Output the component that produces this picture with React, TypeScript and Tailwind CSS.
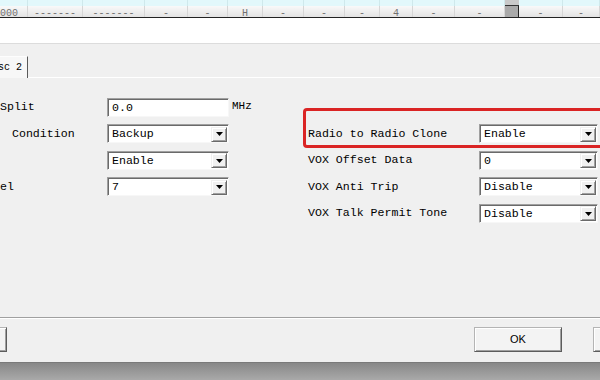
import React from 'react'

// Clipped view of a radio programming dialog (Misc 2 tab)
const MONO = "font-['Liberation_Mono','Courier_New',monospace]"

const COLS = [
  { w: 'w-[28px]', top: '000', bottom: '000', left: true },
  { w: 'w-[55px]', top: '0.00000', bottom: '-------' },
  { w: 'w-[62px]', top: '0.00000', bottom: '-------' },
  { w: 'w-[43px]', top: '', bottom: '-' },
  { w: 'w-[40px]', top: '', bottom: '-' },
  { w: 'w-[35px]', top: 'H', bottom: 'H' },
  { w: 'w-[41px]', top: '', bottom: '-' },
  { w: 'w-[41px]', top: '', bottom: '-' },
  { w: 'w-[35px]', top: '', bottom: '-' },
  { w: 'w-[33px]', top: '4', bottom: '4' },
  { w: 'w-[42px]', top: '', bottom: '-' },
  { w: 'w-[50px]', top: '', bottom: '-', thumbAfter: true },
  { w: 'w-[44px]', top: '', bottom: '-' },
  { w: 'w-[37px]', top: '', bottom: '-' },
]

function GridStrip() {
  return (
    <div className="h-[18px] shrink-0 overflow-hidden border-b border-b-[#222]">
      <div className={`-mt-[6px] flex text-[10px] ${MONO}`}>
        {COLS.map((c, i) => (
          <React.Fragment key={i}>
            <div className={`${c.w} flex shrink-0 flex-col`}>
              <div
                className={`flex h-[12px] items-end border-r border-r-[#cfe9ec] bg-[#e2f8fb] ${
                  c.left ? 'justify-start' : 'justify-center'
                }`}
              >
                <span className="mb-[4px] leading-none text-black">{c.top}</span>
              </div>
              <div
                className={`flex h-[11px] items-end border-r border-r-[#d6d6d6] bg-gradient-to-b from-[#f9f9f9] to-[#e3e3e3] ${
                  c.left ? 'justify-start' : 'justify-center'
                }`}
              >
                <span className="-mb-[2px] leading-none text-[#707070]">{c.bottom}</span>
              </div>
            </div>
            {c.thumbAfter && (
              <div className="flex w-[14px] shrink-0 flex-col">
                <div className="h-[12px] border-b border-b-[#333] bg-[#c9c9c9]" />
                <div className="h-[11px] border-r border-r-[#222] bg-[#a9a9a9]" />
              </div>
            )}
          </React.Fragment>
        ))}
      </div>
    </div>
  )
}

function Arrow() {
  return (
    <svg width="7" height="4" viewBox="0 0 7 4">
      <path d="M0 0h7L3.5 4z" fill="#000" />
    </svg>
  )
}

function Field({ value, dropdown = true }: { value: string; dropdown?: boolean }) {
  return (
    <div className="flex h-[19px] w-full items-center border border-t-[#a0a0a0] border-l-[#a0a0a0] border-r-[#f7f7f7] border-b-[#f7f7f7] bg-white shadow-[inset_1px_1px_0_#6a6a6a]">
      <span className="flex-1 pl-[4px] pt-[1px] text-[11.6px] leading-none">{value}</span>
      {dropdown && (
        <div className="mr-[1px] mt-[1px] flex h-[15px] w-[16px] items-center justify-center border border-t-[#f0f0f0] border-l-[#f0f0f0] border-r-[#6a6a6a] border-b-[#6a6a6a] bg-[#f0f0f0] shadow-[inset_1px_1px_0_#fff,inset_-1px_-1px_0_#a0a0a0]">
          <Arrow />
        </div>
      )}
    </div>
  )
}

function Row({ children }: { children: React.ReactNode }) {
  return <div className="flex h-[26.5px] items-center">{children}</div>
}

function WinButton({ label, className = '' }: { label: string; className?: string }) {
  return (
    <div
      className={`flex h-[25px] w-[88px] shrink-0 items-center justify-center border border-t-[#b4b4b4] border-l-[#b4b4b4] border-r-[#5c5c5c] border-b-[#5c5c5c] bg-[#f3f3f3] shadow-[inset_1px_1px_0_#fff,inset_-1px_-1px_0_#a0a0a0] font-['Liberation_Sans',Arial,sans-serif] text-[11px] text-black ${className}`}
    >
      {label}
    </div>
  )
}

export default function App() {
  return (
    <div className={`relative flex h-[380px] w-[600px] flex-col overflow-hidden bg-[#f0f0f0] text-black ${MONO}`}>
      <GridStrip />
      <div className="h-[26px] shrink-0 border-b border-b-[#dcdcdc] bg-white" />

      {/* tab strip */}
      <div className="mt-[12px] flex h-[22px] shrink-0">
        <div className="flex h-[22px] w-[28px] items-center justify-end overflow-hidden border-t border-t-[#fdfdfd] border-r border-r-[#5a5a5a] bg-[#f7f7f7] pr-[5px] text-[10px] whitespace-nowrap">
          Misc 2
        </div>
        <div className="flex-1 border-b border-b-white" />
      </div>

      {/* tab panel */}
      <div className="flex h-[239px] shrink-0 pt-[15.75px] text-[11.6px]">
        <div className="flex w-[308px] shrink-0 flex-col">
          <Row>
            <span className="w-[107px] shrink-0 whitespace-nowrap">Split</span>
            <div className="w-[122px] shrink-0">
              <Field value="0.0" dropdown={false} />
            </div>
            <span className="ml-[3px] self-start pt-[4px] text-[11px]">MHz</span>
          </Row>
          <Row>
            <span className="w-[107px] shrink-0 whitespace-nowrap pl-[12px]">Condition</span>
            <div className="w-[122px] shrink-0">
              <Field value="Backup" />
            </div>
          </Row>
          <Row>
            <span className="w-[107px] shrink-0" />
            <div className="w-[122px] shrink-0">
              <Field value="Enable" />
            </div>
          </Row>
          <Row>
            <span className="w-[107px] shrink-0">el</span>
            <div className="w-[122px] shrink-0">
              <Field value="7" />
            </div>
          </Row>
        </div>

        <div className="flex w-[290px] shrink-0 flex-col pt-[26.5px]">
          <Row>
            <span className="w-[171px] shrink-0 whitespace-nowrap">Radio to Radio Clone</span>
            <div className="w-[119px] shrink-0">
              <Field value="Enable" />
            </div>
          </Row>
          <Row>
            <span className="w-[171px] shrink-0 whitespace-nowrap">VOX Offset Data</span>
            <div className="w-[119px] shrink-0">
              <Field value="0" />
            </div>
          </Row>
          <Row>
            <span className="w-[171px] shrink-0 whitespace-nowrap">VOX Anti Trip</span>
            <div className="w-[119px] shrink-0">
              <Field value="Disable" />
            </div>
          </Row>
          <Row>
            <span className="w-[171px] shrink-0 whitespace-nowrap">VOX Talk Permit Tone</span>
            <div className="w-[119px] shrink-0">
              <Field value="Disable" />
            </div>
          </Row>
        </div>
      </div>

      {/* footer buttons */}
      <div className="flex shrink-0 border-t border-t-[#a0a0a0] border-b border-b-[#7a7a7a] pt-[9px] pb-[10px] shadow-[inset_0_1px_0_#fff]">
        <WinButton label="Cancel" className="-ml-[81px]" />
        <WinButton label="OK" className="ml-[467px]" />
        <WinButton label="Apply" className="ml-[31px]" />
      </div>
      <div className="flex-1 bg-gradient-to-b from-[#888888] to-[#a9a9a9]" />

      {/* red highlight annotation */}
      <div className="absolute left-[303px] top-[108px] h-[40px] w-[310px] rounded-[4px] border-[3.5px] border-[#da2424]" />
    </div>
  )
}
